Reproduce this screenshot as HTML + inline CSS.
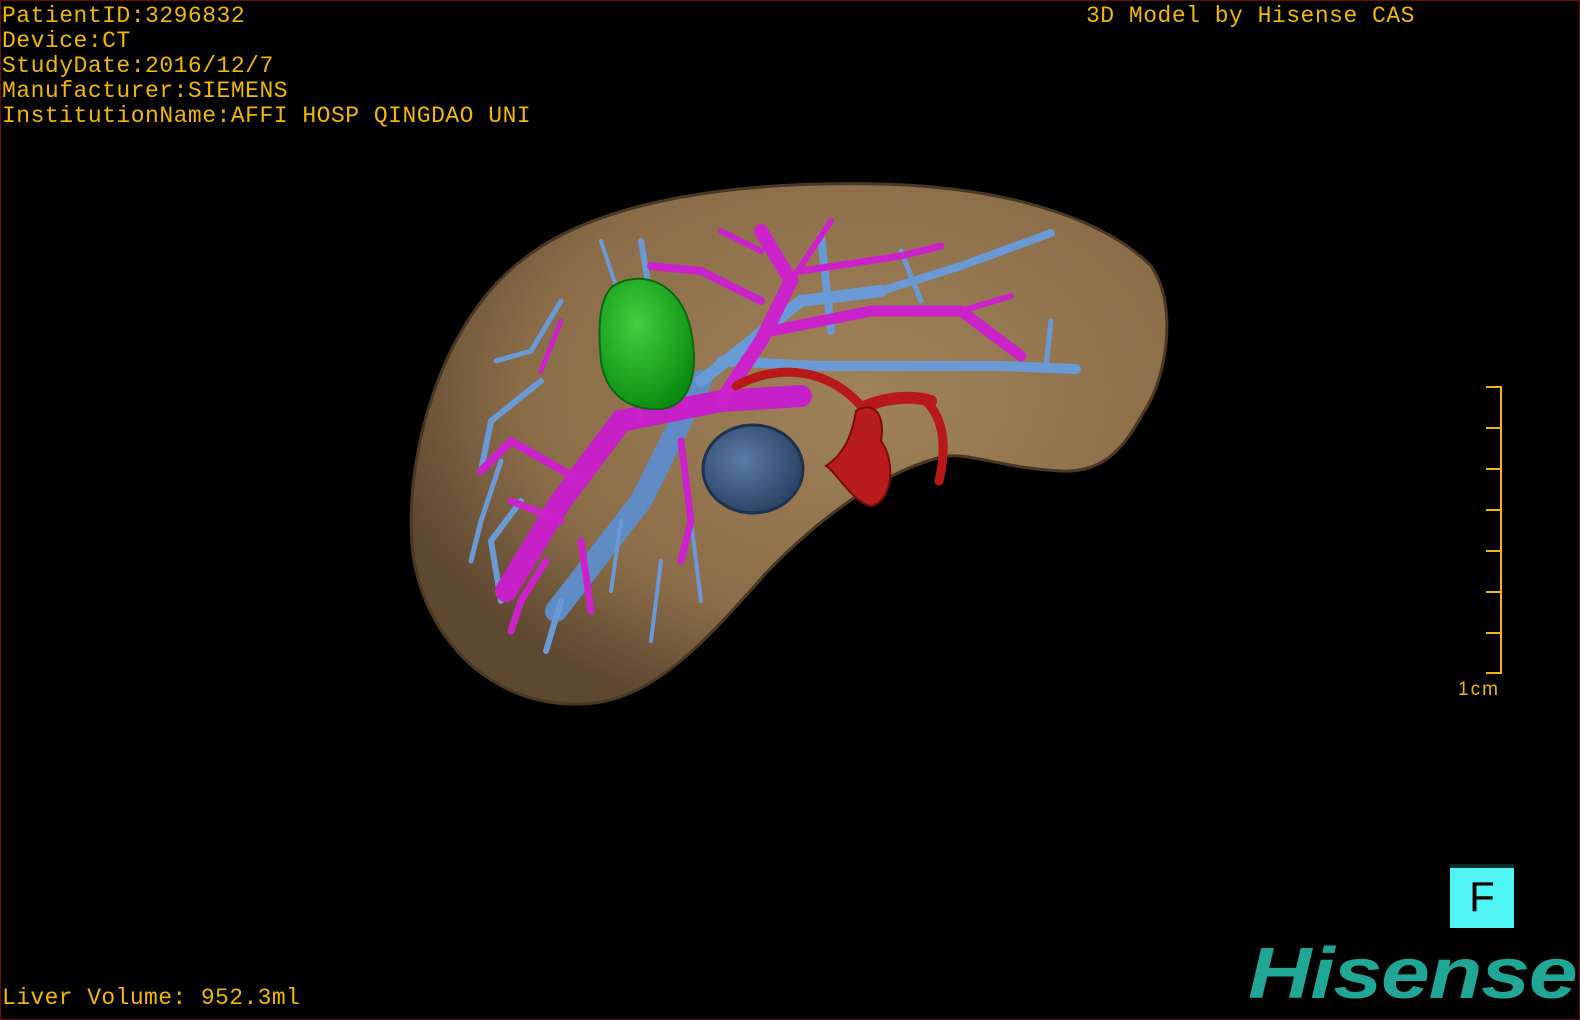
<!DOCTYPE html>
<html><head><meta charset="utf-8"><style>
html,body{margin:0;padding:0;background:#000;}
#c{position:relative;width:1580px;height:1020px;background:#000;overflow:hidden;box-sizing:border-box;border:1px solid #6a0c0c;}
.t{position:absolute;color:#f2b800;font-family:"Liberation Mono","DejaVu Sans Mono",monospace;font-size:23px;line-height:25px;white-space:pre;letter-spacing:0.5px;}
</style></head><body><div id="c">
<div class="t" style="left:1px;top:3px">PatientID:3296832
Device:CT
StudyDate:2016/12/7
Manufacturer:SIEMENS
InstitutionName:AFFI HOSP QINGDAO UNI</div>
<div class="t" style="left:1085px;top:3px;letter-spacing:0.5px">3D Model by Hisense CAS</div>
<div class="t" style="left:1px;top:985px;letter-spacing:0.4px">Liver Volume: 952.3ml</div>
<svg width="1580" height="1020" style="position:absolute;left:0;top:0">
<defs>
<radialGradient id="lg" cx="0.6" cy="0.4" r="0.65">
<stop offset="0" stop-color="#a0825a"/><stop offset="0.7" stop-color="#8a6c48"/><stop offset="1" stop-color="#5e4830"/>
</radialGradient>
<radialGradient id="bb" cx="0.4" cy="0.4" r="0.6"><stop offset="0" stop-color="#5a7aa8"/><stop offset="1" stop-color="#2c4466"/></radialGradient>
<radialGradient id="gg" cx="0.4" cy="0.35" r="0.7"><stop offset="0" stop-color="#40d040"/><stop offset="1" stop-color="#0a8a10"/></radialGradient>
</defs>
<path d="M520,260 C600,195 750,180 880,183 C1000,186 1100,215 1150,265 C1178,305 1165,380 1142,412 C1122,450 1100,472 1060,470 C1000,467 965,450 940,456 C880,472 820,515 765,572 C705,640 650,702 580,703 C500,706 430,650 413,560 C400,480 430,330 520,260 Z" fill="url(#lg)" stroke="#4a3822" stroke-width="3"/>
<g stroke="#6a9ad6" stroke-linecap="round" fill="none">
<path d="M555,610 L640,500 L700,380" stroke-width="22" stroke="#5f8cc4"/>
<path d="M700,380 L800,300 L880,290" stroke-width="12"/>
<path d="M720,360 L820,365 L1000,365 L1075,368" stroke-width="10"/>
<path d="M880,290 L960,265 L1050,232" stroke-width="8"/>
<path d="M820,235 L830,330" stroke-width="8"/>
<path d="M1050,320 L1045,365" stroke-width="5"/>
<path d="M640,240 L650,300 L620,350" stroke-width="6"/>
<path d="M560,300 L530,350 L495,360" stroke-width="5"/>
<path d="M540,380 L490,420 L480,470" stroke-width="6"/>
<path d="M520,500 L490,540 L500,600" stroke-width="6"/>
<path d="M560,600 L545,650" stroke-width="6"/>
<path d="M660,560 L650,640" stroke-width="4"/>
<path d="M690,520 L700,600" stroke-width="4"/>
<path d="M620,520 L610,590" stroke-width="4"/>
<path d="M500,460 L480,520 L470,560" stroke-width="5"/>
<path d="M600,240 L620,300" stroke-width="4"/>
<path d="M900,250 L920,300" stroke-width="5"/>
</g>
<ellipse cx="752" cy="468" rx="50" ry="44" fill="url(#bb)" stroke="#1e3250" stroke-width="3"/>
<g stroke="#cc22cc" stroke-linecap="round" fill="none">
<path d="M505,590 L560,500 L620,420 L720,400 L800,395" stroke-width="22" stroke="#c820c8"/>
<path d="M720,400 L760,340 L790,280 L760,230" stroke-width="14"/>
<path d="M770,330 L870,310 L960,310 L1020,355" stroke-width="11"/>
<path d="M760,300 L700,270 L650,265" stroke-width="8"/>
<path d="M800,270 L900,255 L940,245" stroke-width="7"/>
<path d="M790,280 L830,220" stroke-width="6"/>
<path d="M720,230 L760,250" stroke-width="6"/>
<path d="M960,310 L1010,295" stroke-width="6"/>
<path d="M580,480 L510,440 L480,470" stroke-width="8"/>
<path d="M560,520 L510,500" stroke-width="7"/>
<path d="M545,560 L520,600 L510,630" stroke-width="7"/>
<path d="M580,540 L590,610" stroke-width="7"/>
<path d="M680,440 L690,520 L680,560" stroke-width="7"/>
<path d="M640,420 L630,360" stroke-width="6"/>
<path d="M560,320 L540,370" stroke-width="5"/>
</g>
<path d="M612,285 C640,268 680,280 690,330 C698,370 690,405 660,408 C630,410 605,395 600,360 C596,320 600,295 612,285 Z" fill="url(#gg)" stroke="#0a6a0a" stroke-width="2"/>
<g fill="none" stroke="#b81818" stroke-linecap="round">
<path d="M735,385 C780,360 830,370 860,405" stroke-width="9"/>
<path d="M865,405 C890,395 915,395 930,400" stroke-width="12"/>
<path d="M925,400 C945,420 945,450 938,480" stroke-width="9"/>
</g>
<path d="M855,410 C870,400 885,410 880,440 C895,460 892,500 870,505 C850,500 835,470 825,465 C840,455 850,440 855,410 Z" fill="#b81c1c" stroke="#7a0c0c" stroke-width="2"/>
<g stroke="#f2b800" stroke-width="2" fill="none">
<path d="M1485,386 L1500,386 L1500,672 L1485,672"/>
<path d="M1485,427 H1500 M1485,468 H1500 M1485,509 H1500 M1485,550 H1500 M1485,591 H1500 M1485,632 H1500"/>
</g>
<text x="1457" y="694" fill="#f2b800" font-family="Liberation Sans,sans-serif" font-size="19" letter-spacing="2">1cm</text>
</svg>
<div style="position:absolute;left:1449px;top:863px;width:64px;height:64px;background:#4ff4f4;border-top:4px solid #0a2a2a;box-sizing:border-box;color:#000;font-family:'Liberation Sans',sans-serif;font-size:42px;line-height:58px;text-align:center;">F</div>
<div style="position:absolute;left:1247px;top:935px;color:#1fa696;font-family:'Liberation Sans',sans-serif;font-weight:bold;font-style:italic;font-size:72px;line-height:76px;letter-spacing:-1px;transform:scaleX(1.22);transform-origin:0 0;">Hisense</div>
</div></body></html>
